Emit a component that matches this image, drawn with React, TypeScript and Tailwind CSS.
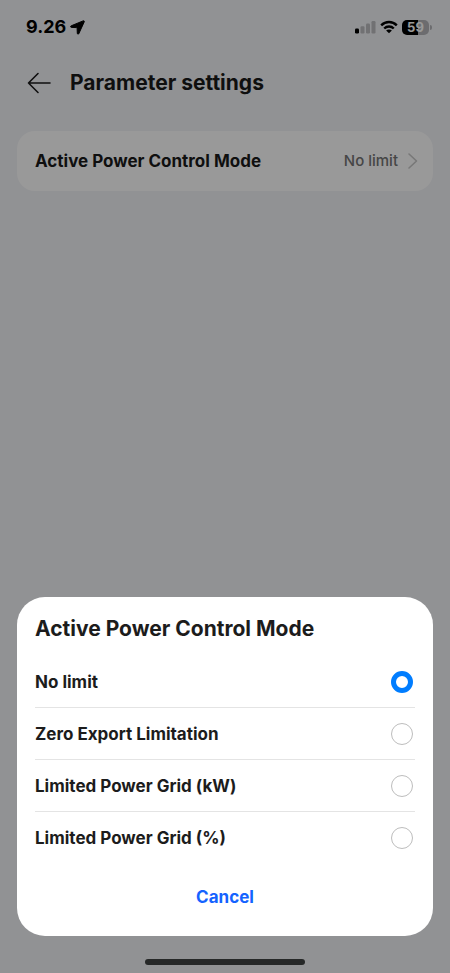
import { useState } from "react"

const modes = [
  "No limit",
  "Zero Export Limitation",
  "Limited Power Grid (kW)",
  "Limited Power Grid (%)",
]

function StatusBar() {
  return (
    <div className="flex h-[54px] items-center justify-between pr-[18px] pl-[26px] text-black">
      <div className="flex items-center gap-1">
        <span className="text-[18px] leading-6 font-bold">9.26</span>
        <svg
          width="15"
          height="15"
          viewBox="0 0 15 15"
          fill="currentColor"
          stroke="currentColor"
          strokeWidth="1"
          strokeLinejoin="round"
          aria-hidden="true"
        >
          <path d="M13.1.9 1.200 5.800c-1 .4-.8 1.500.2 1.600l5.200.2c.3 0 .5.2.5.5l.2 5.200c.1 1 1.200 1.200 1.600.2L14.200 1.900c.4-.8-.3-1.400-1.100-1Z" />
        </svg>
      </div>
      <div className="flex items-center gap-1">
        {/* Signal */}
        <svg width="21" height="14" viewBox="0 0 21 14" aria-hidden="true">
          <rect x="0" y="8.5" width="4" height="5" rx="1.2" fill="#000" />
          <g fill="#000" opacity=".22">
            <rect x="5.5" y="6.2" width="4" height="7.3" rx="1.2" />
            <rect x="11" y="3.6" width="4" height="9.9" rx="1.2" />
            <rect x="16.5" y="1" width="4" height="12.5" rx="1.2" />
          </g>
        </svg>
        {/* Wi-Fi */}
        <svg width="18" height="14" viewBox="0 0 18 14" aria-hidden="true">
          <g fill="none" stroke="#000" strokeWidth="2.4">
            <path d="M1.2 5.3C5.6.9 12.400.9 16.800 5.300" />
            <path d="M4.200 8.500c2.700-2.600 6.900-2.600 9.600 0" />
          </g>
          <path d="M9 13.300 6.100 10.500c1.600-1.500 4.200-1.500 5.800 0Z" fill="#000" />
        </svg>
        {/* Battery */}
        <div className="flex items-center gap-px">
          <div className="flex h-[15px] w-[27px] items-center justify-center rounded-[5px] bg-linear-to-r from-black from-58% to-[#b4b5b9] to-58% text-[13px] leading-none font-bold text-white">
            59
          </div>
          <div className="h-[5px] w-[2px] rounded-r-full bg-[#b4b5b9]" />
        </div>
      </div>
    </div>
  )
}

function ModeSheet({ mode, onChange }: { mode: string; onChange: (mode: string) => void }) {
  return (
    <div
      role="dialog"
      aria-labelledby="sheet-title"
      className="rounded-[28px] bg-white px-[18px] pt-[17px] pb-[13px]"
    >
      <h2 id="sheet-title" className="text-[21px] leading-[30px] font-bold text-[#1c1c1c]">
        Active Power Control Mode
      </h2>
      <div role="radiogroup" aria-labelledby="sheet-title" className="mt-3 divide-y divide-[#e4e4e4]">
        {modes.map((item) => (
          <label
            key={item}
            className="flex h-[52px] items-center justify-between pr-[2px] text-[17px] leading-6 font-bold text-[#1c1c1c]"
          >
            {item}
            <input
              type="radio"
              name="mode"
              checked={item === mode}
              onChange={() => onChange(item)}
              className="size-[22px] appearance-none rounded-full border border-[#bdbdbd] bg-white checked:border-[5px] checked:border-[#007dff]"
            />
          </label>
        ))}
      </div>
      <button
        type="button"
        className="mt-[7px] h-[52px] w-full text-center text-[17px] leading-6 font-bold text-[#1463ff]"
      >
        Cancel
      </button>
    </div>
  )
}

export default function App() {
  const [mode, setMode] = useState("No limit")

  return (
    <div className="min-h-screen bg-[#f2f3f7] font-['Inter',sans-serif]">
      <StatusBar />

      <header className="flex h-[58px] items-center gap-[18px] px-[26px]">
        <button type="button" aria-label="Back">
          <svg
            width="26"
            height="24"
            viewBox="0 0 26 24"
            fill="none"
            stroke="#1a1a1a"
            strokeWidth="1.6"
            strokeLinecap="round"
            strokeLinejoin="round"
          >
            <path d="M24 12H2.500M12 2.500 2.500 12l9.500 9.500" />
          </svg>
        </button>
        <h1 className="text-[21px] leading-[30px] font-bold text-[#1a1a1a]">Parameter settings</h1>
      </header>

      <main className="px-[17px] pt-[19px]">
        <button
          type="button"
          className="flex h-[60px] w-full items-center rounded-[18px] bg-white pr-[15px] pl-[18px]"
        >
          <span className="text-[17px] leading-6 font-bold text-[#1a1a1a]">
            Active Power Control Mode
          </span>
          <span className="ml-auto text-[15px] leading-6 font-medium text-[#757575]">{mode}</span>
          <svg
            className="ml-[9px]"
            width="11"
            height="18"
            viewBox="0 0 11 18"
            fill="none"
            stroke="#c8c8c8"
            strokeWidth="1.6"
            strokeLinecap="round"
            strokeLinejoin="round"
          >
            <path d="m2 2 7.500 7L2 16" />
          </svg>
        </button>
      </main>

      {/* Backdrop with the bottom sheet */}
      <div className="fixed inset-0 flex flex-col justify-end bg-black/40 px-[17px] pb-2">
        <ModeSheet mode={mode} onChange={setMode} />
        <div className="mx-auto mt-[23px] h-[6px] w-40 rounded-full bg-[#262828]" />
      </div>
    </div>
  )
}
